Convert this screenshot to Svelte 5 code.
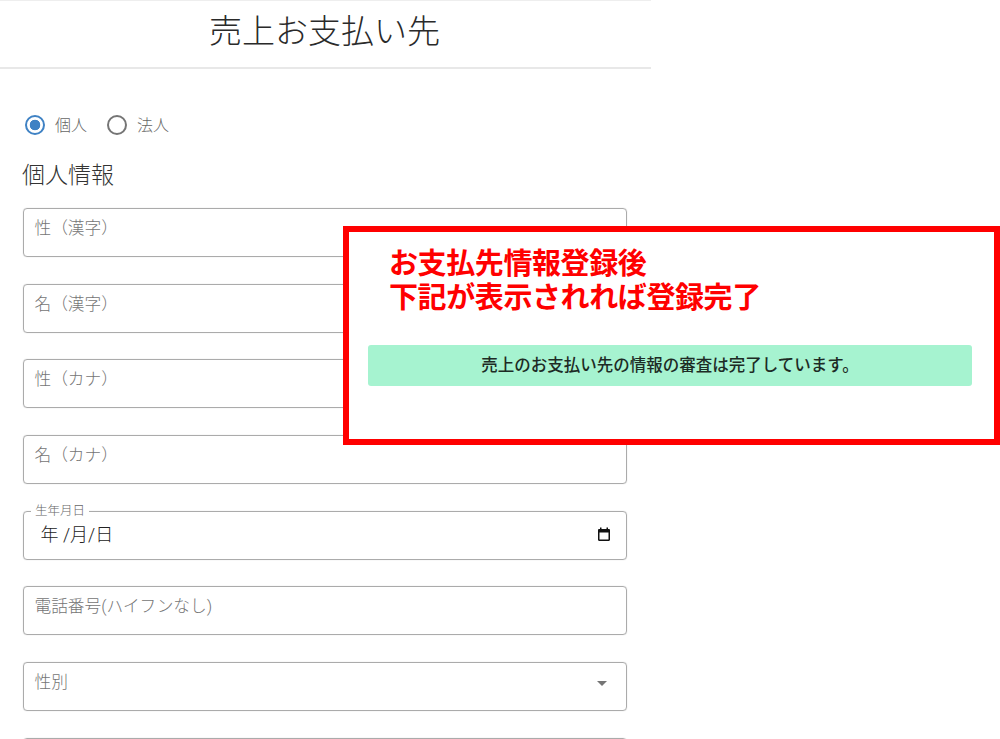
<script>
  const nameFields = ['性（漢字）', '名（漢字）', '性（カナ）', '名（カナ）'];
</script>

<div class="page">
  <header class="title-bar">
    <h1>売上お支払い先</h1>
  </header>

  <form class="form">
    <div class="radios">
      <label class="radio">
        <span class="dot checked"></span>
        <span>個人</span>
      </label>
      <label class="radio">
        <span class="dot"></span>
        <span>法人</span>
      </label>
    </div>

    <h2>個人情報</h2>

    <div class="fields">
      {#each nameFields as label}
        <div class="field"><span class="placeholder">{label}</span></div>
      {/each}

      <div class="field date">
        <span class="legend">生年月日</span>
        <span class="date-value">年 /月/日</span>
        <svg class="calendar" width="16" height="16" viewBox="0 0 16 16" aria-hidden="true">
          <path d="M4 1.5h1.5V3h5V1.5H12V3h.8c.7 0 1.2.5 1.2 1.2v9.6c0 .7-.5 1.2-1.2 1.2H3.2C2.5 15 2 14.500 2 13.800V4.200C2 3.500 2.500 3 3.200 3H4zM3.500 6.500v7h9v-7z" fill="#111" />
        </svg>
      </div>

      <div class="field"><span class="placeholder">電話番号(ハイフンなし)</span></div>

      <div class="field select">
        <span class="placeholder">性別</span>
        <span class="caret"></span>
      </div>

      <div class="field"></div>
    </div>
  </form>

  <aside class="callout">
    <p class="note">お支払先情報登録後<br />下記が表示されれば登録完了</p>
    <div class="alert">売上のお支払い先の情報の審査は完了しています。</div>
  </aside>
</div>

<style>
  :global(body) {
    margin: 0;
    background: #fff;
    overflow: hidden;
  }

  .page {
    position: relative;
    width: 1000px;
    height: 739px;
    overflow: hidden;
    font-family: Roboto, 'Noto Sans CJK JP', sans-serif;
    color: #212121;
  }

  .title-bar {
    box-sizing: border-box;
    width: 651px;
    height: 69px;
    display: flex;
    align-items: center;
    justify-content: center;
    border-top: 1px solid #eee;
    border-bottom: 2px solid #e8e8e8;
  }

  h1 {
    margin: 0 2px 5px 0;
    font-size: 33px;
    font-weight: 300;
    line-height: 40px;
    color: #2a2a2a;
  }

  .form {
    width: 604px;
    padding: 45px 0 0 22.500px;
  }

  .radios {
    display: flex;
    gap: 20px;
    padding-left: 2.500px;
    height: 22px;
    align-items: center;
  }

  .radio {
    display: flex;
    align-items: center;
    gap: 10px;
    font-size: 16px;
    font-weight: 300;
    color: #666;
  }

  .radio span:last-child {
    position: relative;
    top: -1px;
  }

  .dot {
    box-sizing: border-box;
    width: 20px;
    height: 20px;
    border: 2px solid #757575;
    border-radius: 50%;
  }

  .dot.checked {
    border-color: #3f82c4;
    background: radial-gradient(circle, #3f82c4 0 5px, transparent 5.600px);
  }

  h2 {
    margin: 25px 0 17px -0.500px;
    font-size: 23px;
    font-weight: 300;
    line-height: 30px;
    color: #333;
  }

  .fields {
    display: flex;
    flex-direction: column;
    gap: 26.700px;
  }

  .field {
    position: relative;
    box-sizing: border-box;
    height: 49px;
    flex: none;
    padding: 9px 11px;
    border: 1px solid #ababab;
    box-shadow: 0 0 1px #c0c0c0;
    border-radius: 4px;
    display: flex;
    align-items: flex-start;
    justify-content: space-between;
  }

  .placeholder {
    font-size: 16.700px;
    font-weight: 300;
    line-height: 22px;
    color: #757575;
  }

  .legend {
    position: absolute;
    top: -8px;
    left: 7.500px;
    padding: 0 4px;
    background: #fff;
    font-size: 12.500px;
    font-weight: 300;
    line-height: 14px;
    color: #666;
  }

  .date-value {
    padding: 1px 0 0 6px;
    font-size: 18px;
    font-weight: 300;
    line-height: 26px;
    color: #222;
  }

  .calendar {
    margin: 5px 3px 0 0;
  }

  .caret {
    width: 0;
    height: 0;
    margin: 9px 8px 0 0;
    border-left: 5px solid transparent;
    border-right: 5px solid transparent;
    border-top: 5px solid #757575;
  }

  .callout {
    position: absolute;
    left: 343px;
    top: 226px;
    box-sizing: border-box;
    width: 657px;
    height: 219px;
    padding: 15px 22px 0 19px;
    border: 6px solid #f00;
    background: #fff;
  }

  .note {
    margin: 0 0 30px 21px;
    font-size: 29px;
    font-weight: 700;
    line-height: 34px;
    letter-spacing: -0.400px;
    color: #f00;
  }

  .alert {
    height: 41px;
    display: flex;
    align-items: center;
    justify-content: center;
    padding-bottom: 3px;
    box-sizing: border-box;
    background: #a6f3d0;
    border-radius: 3px;
    font-size: 16.500px;
    font-weight: 500;
    color: #1d2b25;
  }
</style>
